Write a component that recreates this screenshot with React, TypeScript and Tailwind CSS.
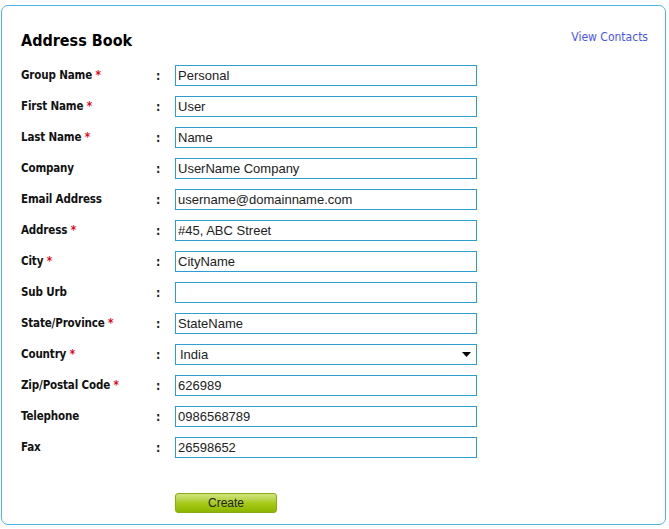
import React from "react";

const rows: { label: string; req: boolean; value: string; select?: boolean }[] = [
  { label: "Group Name", req: true, value: "Personal" },
  { label: "First Name", req: true, value: "User" },
  { label: "Last Name", req: true, value: "Name" },
  { label: "Company", req: false, value: "UserName Company" },
  { label: "Email Address", req: false, value: "username@domainname.com" },
  { label: "Address", req: true, value: "#45, ABC Street" },
  { label: "City", req: true, value: "CityName" },
  { label: "Sub Urb", req: false, value: "" },
  { label: "State/Province", req: true, value: "StateName" },
  { label: "Country", req: true, value: "India", select: true },
  { label: "Zip/Postal Code", req: true, value: "626989" },
  { label: "Telephone", req: false, value: "0986568789" },
  { label: "Fax", req: false, value: "26598652" },
];

const cond: React.CSSProperties = {
  fontFamily: '"DejaVu Sans Condensed", "DejaVu Sans", sans-serif',
  fontStretch: "condensed",
};

export default function App() {
  return (
    <div className="w-[669px] h-[529px] bg-white pt-[5px] pl-[1px]">
      <div className="w-[665px] h-[520px] border border-[#4cb6e0] rounded-[7px] pt-[22px] pl-[19px] pr-[17px]">
        <div className="flex justify-between items-start">
          <h1 className="text-[16px] leading-[25px] font-bold text-black" style={cond}>
            Address Book
          </h1>
          <a className="text-[12px] leading-[16px] text-[#4a56f0] pt-[1px]" style={cond}>
            View Contacts
          </a>
        </div>
        <div className="mt-[12px] flex flex-col gap-[10px]">
          {rows.map((r) => (
            <div key={r.label} className="flex items-center h-[21px]">
              <div className="w-[135px] text-[11.5px] tracking-[-0.15px] font-bold text-[#111] pt-[1px]" style={cond}>
                {r.label}
                {r.req && <span className="text-[#e8001c]"> *</span>}
              </div>
              <div className="w-[19px] text-[12px] font-bold text-[#222]" style={cond}>
                :
              </div>
              <div
                className="w-[302px] h-[21px] border border-[#2a9fd0] bg-white flex items-center justify-between pl-[2px] pr-[5px] text-[13px] text-[#222]"
                style={{ fontFamily: '"Liberation Sans", Arial, sans-serif' }}
              >
                <span className={r.select ? "pl-[2px]" : ""}>{r.value}</span>
                {r.select && (
                  <svg width="9" height="5" viewBox="0 0 9 5">
                    <path d="M0 0 H9 L4.5 5 Z" fill="#000" />
                  </svg>
                )}
              </div>
            </div>
          ))}
        </div>
        <div className="mt-[31px] pl-[154px]">
          <button
            className="w-[102px] h-[20px] rounded-[3px] border border-[#8aab12] bg-gradient-to-b from-[#d2e47c] via-[#a8cb16] to-[#8cb500] text-[12px] text-[#222] leading-none"
            style={{ fontFamily: '"Liberation Sans", Arial, sans-serif' }}
          >
            Create
          </button>
        </div>
      </div>
    </div>
  );
}
